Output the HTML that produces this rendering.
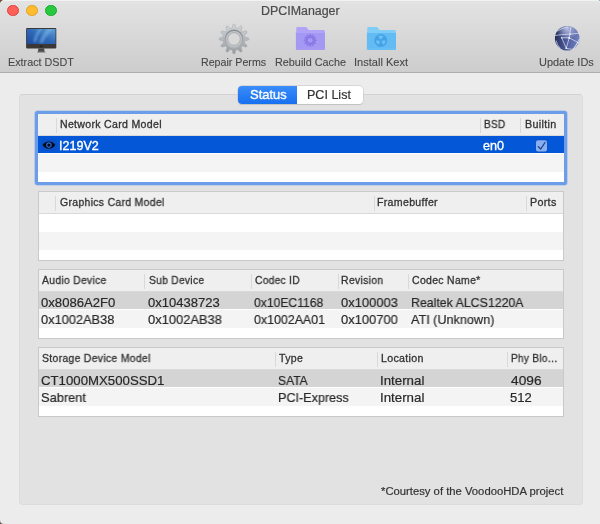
<!DOCTYPE html>
<html><head><meta charset="utf-8">
<style>
*{margin:0;padding:0;box-sizing:border-box}
html,body{width:600px;height:524px;overflow:hidden}
body{position:relative;background:#ebebeb;font-family:"Liberation Sans",sans-serif;color:#222}
.a{position:absolute}
.t{position:absolute;white-space:pre;line-height:1;transform-origin:0 0;will-change:transform}
#toolbar{left:0;top:0;width:600px;height:73px;background:linear-gradient(#e3e3e3,#cdcdcd);border-bottom:1px solid #adadad;border-radius:5px 3px 0 0;box-shadow:inset 0 1px 0 #f2f2f2}
.tl{position:absolute;top:4.5px;width:11.7px;height:11.7px;border-radius:50%}
#box{left:19px;top:94px;width:564px;height:411px;background:#e2e2e2;border:1px solid #dcdcdc;border-top-color:#d2d2d2;border-radius:4px}
.tbl{position:absolute;left:38px;width:526px;height:70px;background:#fff;border:1px solid #c9c9c9;overflow:hidden}
.hd{position:absolute;left:0;top:0;width:100%;height:22px;background:#efefef;border-bottom:1px solid #d9d9d9}
.sep{position:absolute;top:4px;width:1px;height:15px;background:#d9d9d9}
.r{position:absolute;left:0;width:100%;height:18px}
.alt{background:#f4f4f4}
.selg{background:#d4d4d4;height:17px}
.selb{background:#0457d6;height:17px}
</style></head><body>
<div class="a" style="left:0;top:0;width:5px;height:5px;background:#6e5a3e"></div>
<div class="a" style="left:597px;top:0;width:3px;height:3px;background:#7d93b3"></div>
<div class="a" style="left:0;top:519px;width:5px;height:5px;background:#5e5542"></div>
<div class="a" style="left:0;top:0;width:600px;height:524px;background:#ececec;border-radius:5px 3px 0 4px"></div>
<div id="toolbar" class="a"></div>
<div class="tl" style="left:7.3px;background:#fe5f57;border:0.8px solid #e0443e"></div>
<div class="tl" style="left:26.2px;background:#febc2e;border:0.8px solid #dea123"></div>
<div class="tl" style="left:44.9px;background:#28c840;border:0.8px solid #1aab29"></div>
<!-- toolbar icons -->
<svg class="a" style="left:24px;top:26px" width="36" height="30" viewBox="0 0 36 30">
  <defs><linearGradient id="scr" x1="0" y1="1" x2="1" y2="0"><stop offset="0" stop-color="#1f4a9e"/><stop offset="0.5" stop-color="#2f68b8"/><stop offset="1" stop-color="#5c9fd6"/></linearGradient>
  <linearGradient id="stand" x1="0" y1="0" x2="0" y2="1"><stop offset="0" stop-color="#3a3a3a"/><stop offset="1" stop-color="#5a5a5a"/></linearGradient>
  <filter id="bl" x="-0.2" y="-0.2" width="1.4" height="1.4"><feGaussianBlur stdDeviation="0.9"/></filter>
  <clipPath id="sc"><rect x="2.9" y="3.0" width="28.6" height="15"/></clipPath></defs>
  <rect x="2.1" y="2.1" width="30.2" height="20.4" rx="1" fill="#3b3836"/>
  <rect x="2.9" y="3.0" width="28.6" height="15" fill="url(#scr)"/>
  <g clip-path="url(#sc)" filter="url(#bl)">
    <path d="M16 2 Q11 7 9.5 16 L12 16 Q13.5 8 19 2Z" fill="#7fc0ec" opacity="0.55"/>
    <path d="M24 2 Q18 8 15 17 L19 17 Q22 9 30 3Z" fill="#8cc8ee" opacity="0.45"/>
  </g>
  <circle cx="17.2" cy="20.3" r="0.9" fill="#1a1a1a"/>
  <path d="M14.3 22.5 L20.2 22.5 L20.5 26 L14 26Z" fill="url(#stand)"/>
  <rect x="13.2" y="25.6" width="8.2" height="1" rx="0.5" fill="#6a6a6a"/>
</svg>
<svg class="a" style="left:218px;top:22.6px" width="32" height="32" viewBox="0 0 32 32">
  <defs><linearGradient id="gg" x1="0" y1="0" x2="0" y2="1"><stop offset="0" stop-color="#d2d5d8"/><stop offset="0.5" stop-color="#b5b9bd"/><stop offset="1" stop-color="#979b9f"/></linearGradient>
  <linearGradient id="gr" x1="0" y1="0" x2="0" y2="1"><stop offset="0" stop-color="#878b8f"/><stop offset="1" stop-color="#b3b7bb"/></linearGradient></defs>
  <path d="M14.19 4.95 L14.93 1.44 Q16.00 0.90 17.07 1.44 L17.81 4.95 L19.96 5.52 L22.35 2.86 Q23.55 2.92 24.21 3.92 L23.09 7.33 L24.67 8.91 L28.08 7.79 Q29.08 8.45 29.14 9.65 L26.48 12.04 L27.05 14.19 L30.56 14.93 Q31.10 16.00 30.56 17.07 L27.05 17.81 L26.48 19.96 L29.14 22.35 Q29.08 23.55 28.08 24.21 L24.67 23.09 L23.09 24.67 L24.21 28.08 Q23.55 29.08 22.35 29.14 L19.96 26.48 L17.81 27.05 L17.07 30.56 Q16.00 31.10 14.93 30.56 L14.19 27.05 L12.04 26.48 L9.65 29.14 Q8.45 29.08 7.79 28.08 L8.91 24.67 L7.33 23.09 L3.92 24.21 Q2.92 23.55 2.86 22.35 L5.52 19.96 L4.95 17.81 L1.44 17.07 Q0.90 16.00 1.44 14.93 L4.95 14.19 L5.52 12.04 L2.86 9.65 Q2.92 8.45 3.92 7.79 L7.33 8.91 L8.91 7.33 L7.79 3.92 Q8.45 2.92 9.65 2.86 L12.04 5.52Z" fill="url(#gg)" stroke="#a3a7ab" stroke-width="0.5" stroke-linejoin="round"/>
  <circle cx="16" cy="16" r="9.4" fill="url(#gr)"/>
  <circle cx="16" cy="16" r="8.0" fill="#c3c7ca"/>
  <circle cx="16" cy="16" r="6.3" fill="#d9d9d9" stroke="#9a9ea2" stroke-width="0.7"/>
</svg>
<svg class="a" style="left:295px;top:26px" width="31" height="25" viewBox="0 0 31 25">
  <path d="M1.3 1.9 Q1.3 0.9 2.3 0.9 L10.6 0.9 Q11.3 0.9 11.8 1.6 L13.2 3.4 Q13.6 4.0 14.3 4.0 L28.8 4.0 Q29.7 4.0 29.7 4.9 L29.7 10 L1.3 10 Z" fill="#afa4f7"/>
  <path d="M0.9 6.6 Q0.9 5.9 1.6 5.9 L29.3 5.9 Q30 5.9 30 6.6 L30 23.2 Q30 24.0 29.2 24.0 L1.7 24.0 Q0.9 24.0 0.9 23.2 Z" fill="#a598f3"/>
  <rect x="0.9" y="5.9" width="29.1" height="0.9" fill="#b3a8f7"/>
  <rect x="0.9" y="22.6" width="29.1" height="0.8" fill="#b3a8f7" opacity="0.5"/>
  <g transform="translate(8.2,7.3)"><path d="M6.15 2.07 L6.31 0.44 L7.69 0.44 L7.85 2.07 L8.73 2.31 L9.68 0.97 L10.88 1.66 L10.20 3.16 L10.84 3.80 L12.34 3.12 L13.03 4.32 L11.69 5.27 L11.93 6.15 L13.56 6.31 L13.56 7.69 L11.93 7.85 L11.69 8.73 L13.03 9.68 L12.34 10.88 L10.84 10.20 L10.20 10.84 L10.88 12.34 L9.68 13.03 L8.73 11.69 L7.85 11.93 L7.69 13.56 L6.31 13.56 L6.15 11.93 L5.27 11.69 L4.32 13.03 L3.12 12.34 L3.80 10.84 L3.16 10.20 L1.66 10.88 L0.97 9.68 L2.31 8.73 L2.07 7.85 L0.44 7.69 L0.44 6.31 L2.07 6.15 L2.31 5.27 L0.97 4.32 L1.66 3.12 L3.16 3.80 L3.80 3.16 L3.12 1.66 L4.32 0.97 L5.27 2.31Z" fill="#887ae7"/><circle cx="7" cy="7" r="2.4" fill="#a598f3"/></g>
</svg>
<svg class="a" style="left:365.6px;top:26px" width="31" height="25" viewBox="0 0 31 25">
  <path d="M1.3 1.9 Q1.3 0.9 2.3 0.9 L10.6 0.9 Q11.3 0.9 11.8 1.6 L13.2 3.4 Q13.6 4.0 14.3 4.0 L28.8 4.0 Q29.7 4.0 29.7 4.9 L29.7 10 L1.3 10 Z" fill="#80cdf8"/>
  <path d="M0.9 6.6 Q0.9 5.9 1.6 5.9 L29.3 5.9 Q30 5.9 30 6.6 L30 23.2 Q30 24.0 29.2 24.0 L1.7 24.0 Q0.9 24.0 0.9 23.2 Z" fill="#62bcf3"/>
  <rect x="0.9" y="5.9" width="29.1" height="0.9" fill="#86d0f8"/>
  <rect x="0.9" y="22.6" width="29.1" height="0.8" fill="#86d0f8" opacity="0.5"/>
  <g transform="translate(14.8,14.5)"><circle r="6.5" fill="#45a2e6"/><path d="M-0.70 -1.21 L-2.45 -4.24 A4.9 4.9 0 0 1 2.45 -4.24 L0.70 -1.21 A1.4 1.4 0 0 0 -0.70 -1.21Z M1.40 -0.00 L4.90 -0.00 A4.9 4.9 0 0 1 2.45 4.24 L0.70 1.21 A1.4 1.4 0 0 0 1.40 -0.00Z M-0.70 1.21 L-2.45 4.24 A4.9 4.9 0 0 1 -4.90 0.00 L-1.40 0.00 A1.4 1.4 0 0 0 -0.70 1.21Z" fill="#6cc0f6"/></g>
</svg>
<svg class="a" style="left:554px;top:25px" width="27" height="27" viewBox="0 0 27 27">
  <defs><linearGradient id="gl" x1="0" y1="0.4" x2="1" y2="0.5"><stop offset="0" stop-color="#262d58"/><stop offset="0.45" stop-color="#4b5898"/><stop offset="1" stop-color="#7282be"/></linearGradient>
  <radialGradient id="gh" cx="0.5" cy="0.12" r="0.45"><stop offset="0" stop-color="#d8def8" stop-opacity="0.75"/><stop offset="1" stop-color="#d8def8" stop-opacity="0"/></radialGradient>
  <filter id="glw" x="-0.2" y="-0.2" width="1.4" height="1.4"><feGaussianBlur stdDeviation="0.35"/></filter></defs>
  <circle cx="13.2" cy="13.2" r="12.3" fill="url(#gl)"/>
  <circle cx="13.2" cy="13.2" r="12.3" fill="url(#gh)"/>
  <g fill="none" stroke="#eef1ff" stroke-width="0.75" stroke-linecap="round" filter="url(#glw)" opacity="0.85">
    <path d="M1.2 10.5 Q7 9.5 13.5 9.3 Q19 9 25 8.2"/>
    <path d="M16.8 2.5 Q15.8 7 15.2 12.8 Q13.8 18 12.3 23.2"/>
    <path d="M15.2 12.8 L23.8 17.4"/>
    <path d="M7.7 12.8 Q10 18 12.3 23.2"/>
    <path d="M12.3 23.2 Q16 24.5 19.2 24.2 L23.8 17.4"/>
    <path d="M3 6 Q8 3 14 2"/>
    <path d="M2.2 16 Q3 20 6 23"/>
    <path d="M7.7 12.8 L15.2 12.8"/>
    <path d="M19.2 24.2 Q22 22 25.3 14"/>
  </g>
  <g fill="#ffffff" filter="url(#glw)">
    <circle cx="15.2" cy="12.8" r="0.9"/><circle cx="7.7" cy="12.8" r="0.7"/><circle cx="12.3" cy="23.2" r="0.8"/><circle cx="23.8" cy="17.4" r="0.7"/><circle cx="16.3" cy="9.1" r="0.7"/>
  </g>
</svg>

<div id="box" class="a"></div>
<div class="a" style="left:238px;top:85.5px;width:125px;height:18px;border-radius:4px;background:#fff;box-shadow:0 0 0 0.5px #c4c4c4,0 0.5px 1px rgba(0,0,0,0.15)"></div>
<div class="a" style="left:238px;top:85.5px;width:59px;height:18px;border-radius:4px 0 0 4px;background:linear-gradient(#3a8cf9,#1770f0)"></div>
<div class="a" style="left:38px;top:114px;width:526px;height:68px;border-radius:1px;box-shadow:0 0 0 3px #6c9de9,0 0 0.6px 3.6px rgba(108,157,233,0.55)"></div>
<div class="a" style="left:38px;top:114px;width:526px;height:68px;background:#fff;overflow:hidden">
<div class="hd"><div class="sep" style="left:17.5px"></div><div class="sep" style="left:442px"></div><div class="sep" style="left:482px"></div></div>
<div class="r selb" style="top:22px"></div>
<div class="r alt" style="top:40px"></div>
</div>
<div class="tbl" style="top:191px">
<div class="hd"><div class="sep" style="left:16px"></div><div class="sep" style="left:334.5px"></div><div class="sep" style="left:487px"></div></div>
<div class="r alt" style="top:40px"></div>
</div>
<div class="tbl" style="top:269px">
<div class="hd"><div class="sep" style="left:105px"></div><div class="sep" style="left:211.5px"></div><div class="sep" style="left:298.5px"></div><div class="sep" style="left:368.5px"></div></div>
<div class="r selg" style="top:22px"></div>
<div class="r alt" style="top:40px"></div>
</div>
<div class="tbl" style="top:347px">
<div class="hd"><div class="sep" style="left:236px"></div><div class="sep" style="left:338px"></div><div class="sep" style="left:468px"></div></div>
<div class="r selg" style="top:22px"></div>
<div class="r alt" style="top:40px"></div>
</div>
<div class="a" style="left:41px;top:138.5px;width:15.5px;height:12px;border-radius:3px;background:#0853cc"></div>
<svg class="a" style="left:42px;top:140px" width="14" height="10" viewBox="0 0 14 10">
  <path d="M0.5 5.1 C3.2 0.2 10.6 0.2 13.3 5.1 C10.6 10 3.2 10 0.5 5.1Z" fill="#040918"/>
  <circle cx="6.9" cy="5.1" r="2.2" fill="none" stroke="#2a6ddb" stroke-width="1.15"/>
</svg>
<div class="a" style="left:535px;top:139px;width:13px;height:13.5px;border-radius:3px;background:#0853cc"></div>
<svg class="a" style="left:535px;top:139px" width="13" height="13" viewBox="0 0 13 13">
  <rect x="1" y="1.2" width="11" height="11.2" rx="2" fill="#88aff0"/>
  <path d="M3.3 7.6 L5.7 10 L10 3.5" fill="none" stroke="#1f3f86" stroke-width="1.3" stroke-linecap="round" stroke-linejoin="round"/>
</svg>

<div class="t" style="left:260.67px;top:5.14px;font-size:12px;letter-spacing:0.0px;color:#4b4b4b;transform:scaleX(1.0343);-webkit-text-stroke:0.2px currentColor;">DPCIManager</div>
<div class="t" style="left:7.58px;top:56.73px;font-size:10.6px;letter-spacing:0.0px;color:#474747;transform:scaleX(1.0182);-webkit-text-stroke:0.1px currentColor;">Extract DSDT</div>
<div class="t" style="left:201.09px;top:56.73px;font-size:10.6px;letter-spacing:0.0px;color:#474747;transform:scaleX(1.0055);-webkit-text-stroke:0.1px currentColor;">Repair Perms</div>
<div class="t" style="left:274.68px;top:56.73px;font-size:10.6px;letter-spacing:0.0px;color:#474747;transform:scaleX(1.0221);-webkit-text-stroke:0.1px currentColor;">Rebuild Cache</div>
<div class="t" style="left:353.56px;top:56.73px;font-size:10.6px;letter-spacing:0.0px;color:#474747;transform:scaleX(1.0417);-webkit-text-stroke:0.1px currentColor;">Install Kext</div>
<div class="t" style="left:539.16px;top:56.73px;font-size:10.6px;letter-spacing:0.0px;color:#474747;transform:scaleX(1.0332);-webkit-text-stroke:0.1px currentColor;">Update IDs</div>
<div class="t" style="left:250.01px;top:87.50px;font-size:13px;letter-spacing:0.0px;color:#fff;transform:scaleX(0.9940);-webkit-text-stroke:0.35px currentColor;">Status</div>
<div class="t" style="left:306.70px;top:88.82px;font-size:12.5px;letter-spacing:0.0px;color:#333;transform:scaleX(1.0027);-webkit-text-stroke:0.2px currentColor;">PCI List</div>
<div class="t" style="left:59.92px;top:118.61px;font-size:10.5px;letter-spacing:0.3px;color:#333;transform:scaleX(1.0068);-webkit-text-stroke:0.3px currentColor;">Network Card Model</div>
<div class="t" style="left:484.15px;top:118.61px;font-size:10.5px;letter-spacing:0.3px;color:#333;transform:scaleX(0.9592);-webkit-text-stroke:0.3px currentColor;">BSD</div>
<div class="t" style="left:524.71px;top:118.61px;font-size:10.5px;letter-spacing:0.3px;color:#333;transform:scaleX(1.0238);-webkit-text-stroke:0.3px currentColor;">Builtin</div>
<div class="t" style="left:58.69px;top:140.42px;font-size:12.5px;letter-spacing:0.0px;color:#fff;transform:scaleX(1.0053);-webkit-text-stroke:0.35px currentColor;">I219V2</div>
<div class="t" style="left:483.39px;top:140.42px;font-size:12.5px;letter-spacing:0.0px;color:#fff;transform:scaleX(1.0058);-webkit-text-stroke:0.35px currentColor;">en0</div>
<div class="t" style="left:60.36px;top:196.81px;font-size:10.5px;letter-spacing:0.3px;color:#333;transform:scaleX(0.9965);-webkit-text-stroke:0.3px currentColor;">Graphics Card Model</div>
<div class="t" style="left:376.92px;top:196.81px;font-size:10.5px;letter-spacing:0.3px;color:#333;transform:scaleX(1.0105);-webkit-text-stroke:0.3px currentColor;">Framebuffer</div>
<div class="t" style="left:529.91px;top:196.81px;font-size:10.5px;letter-spacing:0.3px;color:#333;transform:scaleX(1.0212);-webkit-text-stroke:0.3px currentColor;">Ports</div>
<div class="t" style="left:42.48px;top:274.81px;font-size:10.5px;letter-spacing:0.3px;color:#333;transform:scaleX(0.9877);-webkit-text-stroke:0.3px currentColor;">Audio Device</div>
<div class="t" style="left:148.69px;top:274.81px;font-size:10.5px;letter-spacing:0.3px;color:#333;transform:scaleX(0.9769);-webkit-text-stroke:0.3px currentColor;">Sub Device</div>
<div class="t" style="left:255.16px;top:274.81px;font-size:10.5px;letter-spacing:0.3px;color:#333;transform:scaleX(0.9734);-webkit-text-stroke:0.3px currentColor;">Codec ID</div>
<div class="t" style="left:340.93px;top:274.81px;font-size:10.5px;letter-spacing:0.3px;color:#333;transform:scaleX(0.9927);-webkit-text-stroke:0.3px currentColor;">Revision</div>
<div class="t" style="left:412.15px;top:274.81px;font-size:10.5px;letter-spacing:0.3px;color:#333;transform:scaleX(0.9977);-webkit-text-stroke:0.3px currentColor;">Codec Name*</div>
<div class="t" style="left:41.12px;top:295.50px;font-size:13px;letter-spacing:0.0px;color:#282828;transform:scaleX(1.0080);-webkit-text-stroke:0.2px currentColor;">0x8086A2F0</div>
<div class="t" style="left:147.62px;top:295.50px;font-size:13px;letter-spacing:0.0px;color:#282828;transform:scaleX(1.0031);-webkit-text-stroke:0.2px currentColor;">0x10438723</div>
<div class="t" style="left:254.44px;top:295.50px;font-size:13px;letter-spacing:0.0px;color:#282828;transform:scaleX(0.9335);-webkit-text-stroke:0.2px currentColor;">0x10EC1168</div>
<div class="t" style="left:340.62px;top:295.50px;font-size:13px;letter-spacing:0.0px;color:#282828;transform:scaleX(0.9937);-webkit-text-stroke:0.2px currentColor;">0x100003</div>
<div class="t" style="left:410.55px;top:295.50px;font-size:13px;letter-spacing:0.0px;color:#282828;transform:scaleX(0.9497);-webkit-text-stroke:0.2px currentColor;">Realtek ALCS1220A</div>
<div class="t" style="left:41.12px;top:313.30px;font-size:13px;letter-spacing:0.0px;color:#282828;transform:scaleX(0.9851);-webkit-text-stroke:0.2px currentColor;">0x1002AB38</div>
<div class="t" style="left:147.62px;top:313.30px;font-size:13px;letter-spacing:0.0px;color:#282828;transform:scaleX(0.9919);-webkit-text-stroke:0.2px currentColor;">0x1002AB38</div>
<div class="t" style="left:254.44px;top:313.30px;font-size:13px;letter-spacing:0.0px;color:#282828;transform:scaleX(0.9537);-webkit-text-stroke:0.2px currentColor;">0x1002AA01</div>
<div class="t" style="left:340.62px;top:313.30px;font-size:13px;letter-spacing:0.0px;color:#282828;transform:scaleX(0.9923);-webkit-text-stroke:0.2px currentColor;">0x100700</div>
<div class="t" style="left:411.40px;top:313.30px;font-size:13px;letter-spacing:0.0px;color:#282828;transform:scaleX(0.9718);-webkit-text-stroke:0.2px currentColor;">ATI (Unknown)</div>
<div class="t" style="left:41.98px;top:353.11px;font-size:10.5px;letter-spacing:0.3px;color:#333;transform:scaleX(0.9941);-webkit-text-stroke:0.3px currentColor;">Storage Device Model</div>
<div class="t" style="left:279.41px;top:353.11px;font-size:10.5px;letter-spacing:0.3px;color:#333;transform:scaleX(1.0039);-webkit-text-stroke:0.3px currentColor;">Type</div>
<div class="t" style="left:381.42px;top:353.11px;font-size:10.5px;letter-spacing:0.3px;color:#333;transform:scaleX(1.0152);-webkit-text-stroke:0.3px currentColor;">Location</div>
<div class="t" style="left:510.95px;top:353.11px;font-size:10.5px;letter-spacing:0.3px;color:#333;transform:scaleX(0.9566);-webkit-text-stroke:0.3px currentColor;">Phy Blo…</div>
<div class="t" style="left:40.97px;top:373.70px;font-size:13px;letter-spacing:0.0px;color:#282828;transform:scaleX(1.0168);-webkit-text-stroke:0.2px currentColor;">CT1000MX500SSD1</div>
<div class="t" style="left:277.77px;top:373.70px;font-size:13px;letter-spacing:0.0px;color:#282828;transform:scaleX(0.9273);-webkit-text-stroke:0.2px currentColor;">SATA</div>
<div class="t" style="left:379.88px;top:373.70px;font-size:13px;letter-spacing:0.0px;color:#282828;transform:scaleX(1.0223);-webkit-text-stroke:0.2px currentColor;">Internal</div>
<div class="t" style="left:510.88px;top:373.70px;font-size:13px;letter-spacing:0.0px;color:#282828;transform:scaleX(1.0564);-webkit-text-stroke:0.2px currentColor;">4096</div>
<div class="t" style="left:40.52px;top:391.40px;font-size:13px;letter-spacing:0.0px;color:#282828;transform:scaleX(0.9844);-webkit-text-stroke:0.2px currentColor;">Sabrent</div>
<div class="t" style="left:277.73px;top:391.40px;font-size:13px;letter-spacing:0.0px;color:#282828;transform:scaleX(0.9678);-webkit-text-stroke:0.2px currentColor;">PCI-Express</div>
<div class="t" style="left:379.88px;top:391.40px;font-size:13px;letter-spacing:0.0px;color:#282828;transform:scaleX(1.0223);-webkit-text-stroke:0.2px currentColor;">Internal</div>
<div class="t" style="left:510.00px;top:391.40px;font-size:13px;letter-spacing:0.0px;color:#282828;transform:scaleX(1.0000);-webkit-text-stroke:0.2px currentColor;">512</div>
<div class="t" style="left:381.34px;top:485.88px;font-size:11.25px;letter-spacing:0.0px;color:#333;transform:scaleX(1.0019);-webkit-text-stroke:0.2px currentColor;">*Courtesy of the VoodooHDA project</div>
</body></html>
